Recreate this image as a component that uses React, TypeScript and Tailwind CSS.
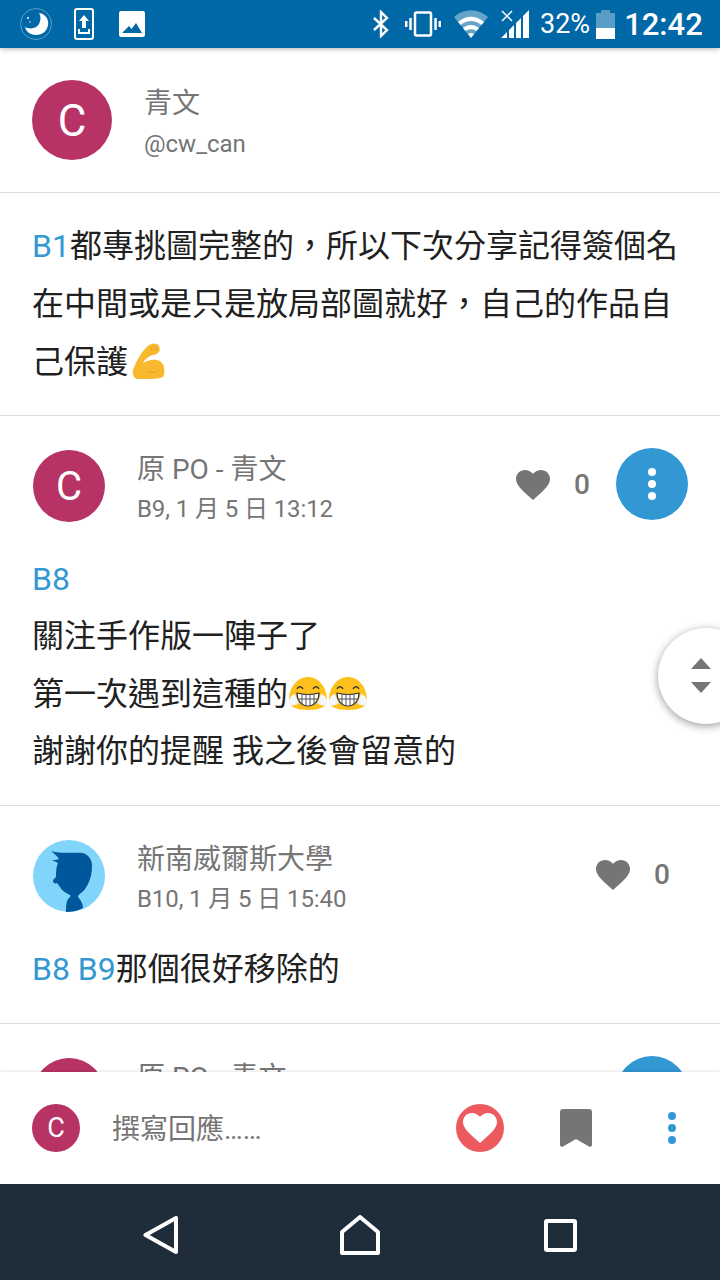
const FONT = 'font-["Roboto","Noto_Sans_CJK_TC",sans-serif]';

function HeartIcon({ className }: { className?: string }) {
  return (
    <svg viewBox="0 0 34 30" className={className} fill="currentColor">
      <path d="M17 30 L14.5 27.7 C5.8 20 0 14.8 0 8.9 C0 4 3.9 0 9 0 C12 0 15 1.4 17 3.7 C19 1.4 22 0 25 0 C30.100 0 34 4 34 8.900 C34 14.800 28.200 20 19.500 27.700 Z" />
    </svg>
  );
}

function Dots({ className }: { className?: string }) {
  return (
    <svg viewBox="0 0 8 32" className={className} fill="currentColor">
      <circle cx="4" cy="4" r="4" />
      <circle cx="4" cy="16" r="4" />
      <circle cx="4" cy="28" r="4" />
    </svg>
  );
}

function LetterAvatar({ size }: { size: 'lg' | 'md' | 'sm' }) {
  const cls =
    size === 'lg'
      ? 'w-20 h-20 text-[44px] pt-0.5'
      : size === 'md'
        ? 'w-[72px] h-[72px] text-[40px] pt-0.5'
        : 'w-12 h-12 text-[27px]';
  return (
    <div className={`${cls} shrink-0 rounded-full bg-[#b73366] text-white flex items-center justify-center`}>C</div>
  );
}

function BoyAvatar() {
  return (
    <svg viewBox="0 0 72 72" className="w-[72px] h-[72px] shrink-0">
      <circle cx="36" cy="36" r="36" fill="#81d4fa" />
      <path
        fill="#01579b"
        d="M18 11 C28 14 40 12 50 13 C56 15 59 20 59 26 C59 32 58 38 55 44 C53 48 51 51 48 53 C46 54 45 56 45 57 C48 60 50 64 50 68 C44 71 38 72 33 72 C33 67 33 62 35 59 C37 57 38 56 37 55 C33 53 29 51 27 47 L24 43 C22 44 20 43 20 41 C20 39 22 38 23 37 C23 32 23 27 25 23 C23 22 21 21 19 20 C21 20 24 20 26 19 C24 16 21 13 18 11 Z"
      />
    </svg>
  );
}

function MuscleEmoji() {
  return (
    <svg viewBox="0 0 34 38" className="inline-block ml-1 w-[34px] h-[38px] align-[-7px]">
      <path
        fill="#f8b92f"
        d="M1 28 C4 20 8 12 13 7 C15 4 18 2 20 2 C23 1 26 2 27 4 C28 7 28 9 27 10 C25 12 23 13 21 13 C18 14 16 15 15 16 C13 18 11 20 11 21 C15 19 20 17 25 18 C29 19 32 22 32 26 C33 30 32 33 31 35 C26 37 20 37 15 37 C11 37 7 37 5 37 C2 36 0 32 1 28 Z"
      />
      <path fill="none" stroke="#e59f26" strokeWidth="1" d="M19 5 L20 9 M22 4 L23 8 M25 5 L25 8 M14 29 C18 31 23 31 27 28" />
    </svg>
  );
}

function LaughEmoji() {
  return (
    <svg viewBox="0 0 40 34" className="inline-block w-10 h-[34px] align-[-6px]">
      <path fill="#fcc21b" d="M20 0 C31 0 38 10 39 21 C40 30 32 33 20 33 C8 33 0 30 1 21 C2 10 9 0 20 0 Z" />
      <path fill="#f4f8fb" d="M1 25 C1 21 3 18 7 17 C8 20 9 23 11 26 C8 29 1 30 1 25 Z M39 25 C39 21 37 18 33 17 C32 20 31 23 29 26 C32 29 39 30 39 25 Z" />
      <path fill="#fff" stroke="#3a3a3a" strokeWidth="1.200" d="M9 16 C15 18 25 18 31 16 C31 23 27 29 20 29 C13 29 9 23 9 16 Z" />
      <path fill="none" stroke="#555555" strokeWidth="1" d="M14 18 V27 M18 18 V29 M22 18 V29 M26 18 V27 M10 22 H30" />
      <path fill="none" stroke="#3a3a3a" strokeWidth="1.400" d="M9 12 C10 9 14 9 15 12 M25 12 C26 9 30 9 31 12" />
    </svg>
  );
}

function Blue({ children }: { children: string }) {
  return <span className="text-[#3498d3]">{children}</span>;
}

function CommentHead({ avatar, name, meta, mine }: { avatar: React.ReactNode; name: string; meta: string; mine?: boolean }) {
  return (
    <div className="flex items-start">
      {avatar}
      <div className="ml-8 flex-1 text-[#757575]">
        <div className="text-[28px] leading-10">{name}</div>
        <div className="text-[24px] leading-9 tracking-[-0.1px] mt-[1px]">{meta}</div>
      </div>
      <div className={`flex items-center text-[#757575] ${mine ? 'mr-[26px]' : 'mr-[50px]'} h-[70px]`}>
        <HeartIcon className="w-[34px] h-[30px]" />
        <span className="ml-6 text-[28px] font-medium">0</span>
      </div>
      {mine && (
        <div className="w-[72px] h-[72px] mr-[32px] -mt-0.5 rounded-full bg-[#3297d3] flex items-center justify-center text-white">
          <Dots className="w-2 h-8" />
        </div>
      )}
    </div>
  );
}

export default function App() {
  return (
    <div className={`${FONT} relative w-[720px] h-[1280px] overflow-hidden bg-white flex flex-col`}>
      {/* Status bar */}
      <div className="relative z-10 h-12 shrink-0 bg-[#0068a6] shadow-[0_1px_5px_rgba(0,0,0,0.3)] flex items-center text-white">
        <svg viewBox="0 0 32 32" className="ml-5 w-8 h-8">
          <circle cx="16" cy="16" r="15.500" fill="none" stroke="#ffffff" strokeOpacity="0.35" strokeWidth="1" />
          <path fill="#fff" d="M19 5 C26 6 29 12 28 17 C27 24 21 27 16 27 C11 27 6 24 5 19 C11 22 17 20 19 16 C21 12 21 8 19 5 Z" />
          <circle cx="8" cy="10" r="1" fill="#fff" />
          <circle cx="10" cy="14" r="0.700" fill="#fff" />
        </svg>
        <svg viewBox="0 0 20 32" className="ml-[22px] w-5 h-8">
          <rect x="1" y="1" width="18" height="30" rx="2" fill="none" stroke="#fff" strokeWidth="2" />
          <path fill="#fff" d="M10 7 L15 13 H12 V20 H8 V13 H5 Z" />
          <path fill="none" stroke="#fff" strokeWidth="2" d="M5 21 V25 H15 V21" />
        </svg>
        <svg viewBox="0 0 26 26" className="ml-[25px] w-[26px] h-[26px]">
          <path fill="#fff" fillRule="evenodd" d="M2 0 H24 A2 2 0 0 1 26 2 V24 A2 2 0 0 1 24 26 H2 A2 2 0 0 1 0 24 V2 A2 2 0 0 1 2 0 Z M3 22 H23 L17 12 L12.500 18 L10 15 Z" />
        </svg>

        <svg viewBox="0 0 18 28" className="ml-[227px] w-[18px] h-7">
          <path fill="none" stroke="#fff" strokeWidth="2.400" d="M2 8 L15 20 L9 26 V2 L15 8 L2 20" />
        </svg>
        <svg viewBox="0 0 36 26" className="ml-[15px] w-9 h-[26px]">
          <rect x="10" y="1.500" width="16" height="23" rx="1.500" fill="none" stroke="#fff" strokeWidth="2.500" />
          <path fill="none" stroke="#fff" strokeWidth="2.500" d="M5.500 7 V19 M1.200 10 V16 M30.500 7 V19 M34.800 10 V16" />
        </svg>
        <svg viewBox="0 0 34 28" className="ml-[13px] w-[34px] h-7">
          <path fill="#fff" fillOpacity="0.4" d="M0 7 C10 -2 24 -2 34 7 L17 28 Z" />
          <path fill="#fff" d="M4 12 C12 5 22 5 30 12 L27.500 15 C20.500 9.500 13.500 9.500 6.500 15 Z M9 18 C14 14 20 14 25 18 L22.500 21 C19 18.500 15 18.500 11.500 21 Z M14 24 C16 22.800 18 22.800 20 24 L17 28 Z" />
        </svg>
        <svg viewBox="0 0 28 28" className="ml-[13px] w-7 h-7">
          <path fill="#fff" d="M0 28 L6 22 V28 Z M8 20 L13 15 V28 H8 Z M15 13 L20 8 V28 H15 Z M22 6 L28 0 V28 H22 Z" />
          <path fill="none" stroke="#fff" strokeWidth="1.500" d="M1 1 L11 11 M11 1 L1 11" />
        </svg>
        <span className="ml-[11px] text-[27px] leading-none">32%</span>
        <svg viewBox="0 0 19 29" className="ml-[6px] w-[19px] h-[29px]">
          <path fill="#fff" fillOpacity="0.35" d="M5 0 H14 V3 H19 V29 H0 V3 H5 Z" />
          <rect x="0" y="18" width="19" height="11" fill="#fff" />
        </svg>
        <span className="ml-[9px] text-[31px] leading-none font-medium">12:42</span>
      </div>

      {/* Scrolling content */}
      <div className="flex-1 min-h-0 overflow-hidden text-[#212121]">
        {/* Author */}
        <div className="h-[145px] border-b border-[#dddddd] pl-8 pt-8 flex items-start">
          <LetterAvatar size="lg" />
          <div className="ml-8 text-[#757575]">
            <div className="text-[28px] leading-10 mt-1">青文</div>
            <div className="text-[24px] leading-10">@cw_can</div>
          </div>
        </div>

        {/* Post */}
        <div className="border-b border-[#dddddd] px-8 py-6 text-[32px] leading-[58px]">
          <Blue>B1</Blue>都專挑圖完整的，所以下次分享記得簽個名
          <br />
          在中間或是只是放局部圖就好，自己的作品自
          <br />
          己保護
          <MuscleEmoji />
        </div>

        {/* B9 */}
        <div className="border-b border-[#dddddd] pt-[34px] pl-[33px] pb-[25px]">
          <CommentHead avatar={<LetterAvatar size="md" />} name="原 PO - 青文" meta="B9, 1 月 5 日 13:12" mine />
          <div className="-ml-px mt-6 text-[32px] leading-[57.300px]">
            <Blue>B8</Blue>
            <br />
            關注手作版一陣子了
            <br />
            第一次遇到這種的
            <LaughEmoji />
            <LaughEmoji />
            <br />
            謝謝你的提醒 我之後會留意的
          </div>
        </div>

        {/* B10 */}
        <div className="border-b border-[#dddddd] pt-[34px] pl-[33px] pb-[25px]">
          <CommentHead avatar={<BoyAvatar />} name="新南威爾斯大學" meta="B10, 1 月 5 日 15:40" />
          <div className="-ml-px mt-[23px] text-[32px] leading-[58px]">
            <Blue>B8 B9</Blue>那個很好移除的
          </div>
        </div>

        {/* B11 */}
        <div className="pt-[34px] pl-[33px]">
          <CommentHead avatar={<LetterAvatar size="md" />} name="原 PO - 青文" meta="B11, 1 月 5 日 16:02" mine />
        </div>
      </div>

      {/* Reply bar */}
      <div className="relative z-10 h-28 shrink-0 bg-white shadow-[0_-1px_3px_rgba(0,0,0,0.1)] flex items-center pl-8">
        <LetterAvatar size="sm" />
        <div className="ml-8 mt-1 flex-1 text-[28px] text-[#757575]">撰寫回應……</div>
        <div className="w-12 h-12 rounded-full bg-[#ec5a5d] text-white flex items-center justify-center">
          <HeartIcon className="w-[34px] h-[30px]" />
        </div>
        <svg viewBox="0 0 32 38" className="ml-14 w-8 h-[38px]">
          <path fill="#757575" d="M3 0 H29 A3 3 0 0 1 32 3 V36 A2 2 0 0 1 29 37.500 L16 30 L3 37.500 A2 2 0 0 1 0 36 V3 A3 3 0 0 1 3 0 Z" />
        </svg>
        <Dots className="ml-[76px] mr-11 w-2 h-8 text-[#3297d3]" />
      </div>

      {/* Navigation bar */}
      <div className="h-24 shrink-0 bg-[#1f2d3a] flex items-center pt-1.5">
        <svg viewBox="0 0 36 38" className="ml-[143px] w-9 h-[38px]">
          <path fill="none" stroke="#fff" strokeWidth="4" strokeLinejoin="round" d="M2.500 19 L33 2 V36 Z" />
        </svg>
        <svg viewBox="0 0 40 40" className="ml-[161px] w-10 h-10">
          <path fill="none" stroke="#fff" strokeWidth="4" strokeLinejoin="round" d="M2 17 L20 2 L38 17 V38 H2 Z" />
        </svg>
        <svg viewBox="0 0 33 33" className="ml-[164px] w-[33px] h-[33px]">
          <rect x="2" y="2" width="29" height="29" rx="1" fill="none" stroke="#fff" strokeWidth="4" />
        </svg>
      </div>

      {/* Scroll jump button */}
      <div className="absolute left-[658px] top-[628px] w-24 h-24 rounded-full bg-white shadow-[0_2px_8px_rgba(0,0,0,0.4)] flex flex-col pl-[33px] pt-[30px]">
        <svg viewBox="0 0 20 36" className="w-5 h-9">
          <path fill="#757575" d="M10 0 L20 11 H0 Z M0 24 H20 L10 35 Z" />
        </svg>
      </div>
    </div>
  );
}
